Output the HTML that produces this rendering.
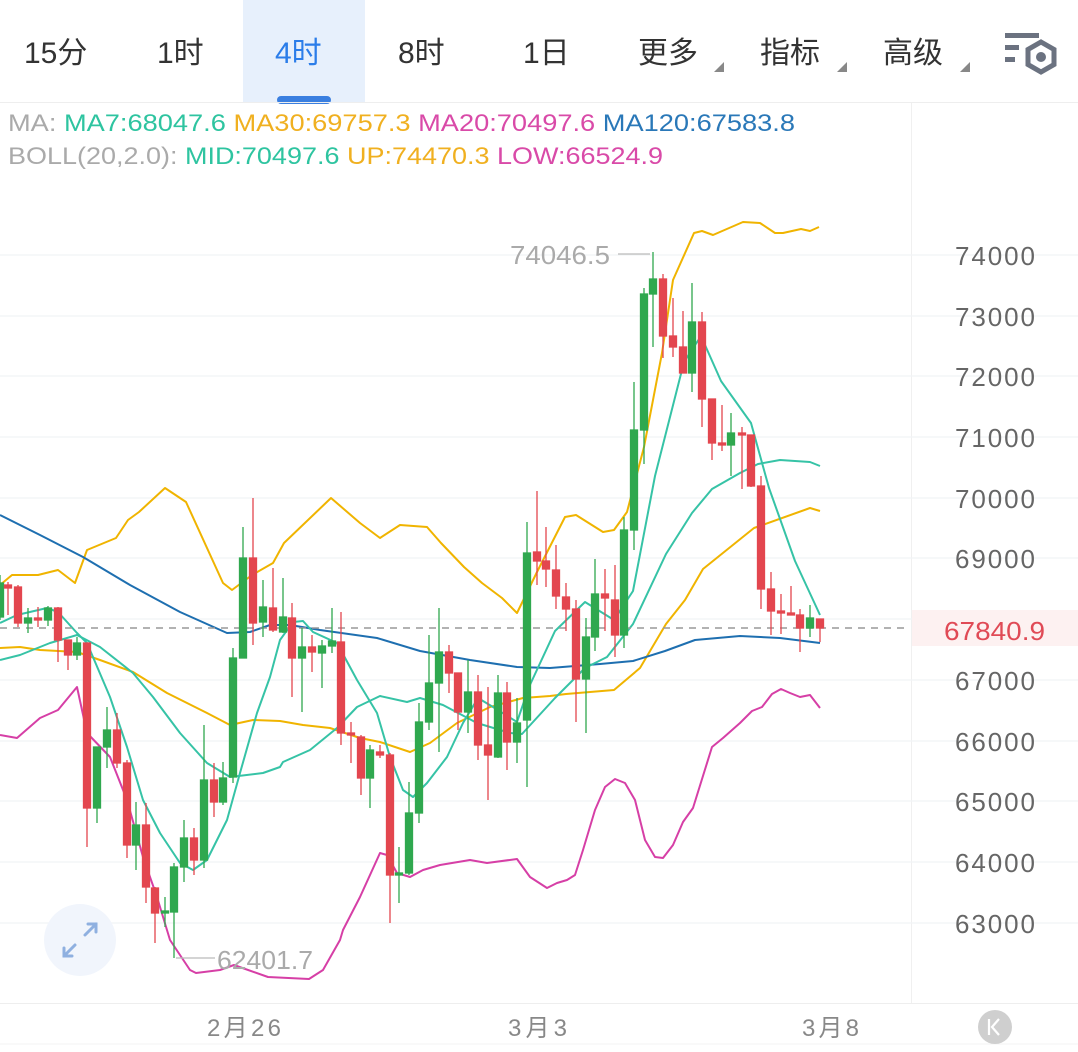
<!DOCTYPE html>
<html><head><meta charset="utf-8">
<style>
html,body{margin:0;padding:0;background:#fff;}
body{width:1078px;height:1052px;overflow:hidden;position:relative;font-family:"Liberation Sans","Noto Sans CJK SC",sans-serif;}
svg{position:absolute;left:0;top:0;}
</style></head><body>
<svg width="1078" height="1052" viewBox="0 0 1078 1052" xmlns="http://www.w3.org/2000/svg" font-family="Liberation Sans, Noto Sans CJK SC, sans-serif">
<rect x="243" y="0" width="122" height="102" fill="#e7f0fc"/>
<rect x="277" y="96" width="54" height="8" rx="4" fill="#3a7fe0"/>
<line x1="0" y1="102.5" x2="1078" y2="102.5" stroke="#eeeeee" stroke-width="1"/>
<g font-size="30" fill="#333">
<text x="24" y="63">15分</text>
<text x="157" y="63">1时</text>
<text x="275" y="63" fill="#2b7de9">4时</text>
<text x="398" y="63">8时</text>
<text x="523" y="63">1日</text>
<text x="638" y="63">更多</text>
<text x="760" y="63">指标</text>
<text x="883" y="63">高级</text>
</g>
<g fill="#888">
<polygon points="714,72 724,72 724,62"/>
<polygon points="837,72 847,72 847,62"/>
<polygon points="960,72 970,72 970,62"/>
</g>
<g fill="#6b7280">
<rect x="1005" y="33" width="34" height="5"/>
<rect x="1005" y="45" width="14" height="5"/>
<rect x="1005" y="57" width="10" height="5"/>
<polygon points="1041,42 1054,49.5 1054,64.5 1041,72 1028,64.5 1028,49.5" fill="none" stroke="#6b7280" stroke-width="5"/>
<circle cx="1041" cy="57" r="5"/>
</g>
<g font-size="24">
<text x="8" y="131" textLength="787" lengthAdjust="spacingAndGlyphs"><tspan fill="#aaa">MA: </tspan><tspan fill="#2ec4a0">MA7:68047.6 </tspan><tspan fill="#f0b020">MA30:69757.3 </tspan><tspan fill="#d94aa8">MA20:70497.6 </tspan><tspan fill="#2a78b8">MA120:67583.8</tspan></text>
<text x="8" y="164" textLength="655" lengthAdjust="spacingAndGlyphs"><tspan fill="#aaa">BOLL(20,2.0): </tspan><tspan fill="#2ec4a0">MID:70497.6 </tspan><tspan fill="#f0b020">UP:74470.3 </tspan><tspan fill="#d94aa8">LOW:66524.9</tspan></text>
</g>
<line x1="911.5" y1="103" x2="911.5" y2="1003" stroke="#f0f0f0"/>
<g stroke="#f1f3f5" stroke-width="1.2">
<line x1="0" y1="255" x2="1078" y2="255"/><line x1="0" y1="316" x2="1078" y2="316"/><line x1="0" y1="376" x2="1078" y2="376"/><line x1="0" y1="437" x2="1078" y2="437"/><line x1="0" y1="498" x2="1078" y2="498"/><line x1="0" y1="558" x2="1078" y2="558"/><line x1="0" y1="619" x2="1078" y2="619"/><line x1="0" y1="680" x2="1078" y2="680"/><line x1="0" y1="741" x2="1078" y2="741"/><line x1="0" y1="801" x2="1078" y2="801"/><line x1="0" y1="862" x2="1078" y2="862"/><line x1="0" y1="923" x2="1078" y2="923"/>
</g>
<g font-size="26" fill="#666" lengthAdjust="spacingAndGlyphs">
<text x="955" y="265" textLength="80">74000</text><text x="955" y="326" textLength="80">73000</text><text x="955" y="386" textLength="80">72000</text><text x="955" y="447" textLength="80">71000</text><text x="955" y="508" textLength="80">70000</text><text x="955" y="568" textLength="80">69000</text><text x="955" y="629" textLength="80">68000</text><text x="955" y="690" textLength="80">67000</text><text x="955" y="751" textLength="80">66000</text><text x="955" y="811" textLength="80">65000</text><text x="955" y="872" textLength="80">64000</text><text x="955" y="933" textLength="80">63000</text>
</g>
<rect x="912" y="610" width="166" height="36" fill="#fdf1f1"/>
<text x="944" y="640" font-size="26" fill="#e04a56" textLength="101" lengthAdjust="spacingAndGlyphs">67840.9</text>
<circle cx="80" cy="940" r="36" fill="#f1f5fc"/>
<g stroke="#8fb0e0" stroke-width="3" fill="none" stroke-linecap="round">
<path d="M85 935 L96 924 M88 924 L96 924 L96 932"/>
<path d="M75 945 L64 956 M64 948 L64 956 L72 956"/>
</g>
<g fill="none" stroke-width="2" stroke-linejoin="round">
<polyline stroke="#f0b400" points="0,585 12,575 38,575 58,570 75,583 87,550 116,538 128,520 139,512 165,488 186,502 223,583 232,590 252,575 273,563 284,543 331,498 360,523 380,538 400,525 427,527 441,543 464,567 482,583 502,598 517,613 537,572 565,517 576,515 603,532 614,530 627,512 644,447 662,353 673,280 694,233 702,231 713,235 743,222 760,223 775,233 783,233 801,229 810,231 819,227"/>
<polyline stroke="#f0b400" points="0,648 20,647 40,650 77,652 100,660 133,672 167,693 207,713 230,725 253,720 280,721 303,725 330,728 360,738 380,742 410,752 430,743 457,723 490,707 523,698 550,696 566,694 614,690 640,668 666,624 685,600 703,569 754,528 810,508 820,511"/>
<polyline stroke="#1e6fb0" points="0,515 40,535 83,557 130,585 180,612 227,633 250,632 270,625 290,625 320,630 377,638 420,651 470,660 517,667 550,668 600,664 633,661 665,651 695,640 740,636 780,638 820,643"/>
<polyline stroke="#d63fa6" points="0,735 17,738 40,718 58,710 77,687 87,733 110,757 127,800 143,857 157,897 170,940 190,970 196,973 220,970 234,965 268,977 309,979 323,970 340,940 343,930 360,897 380,853 387,855 397,873 410,877 423,870 440,865 470,860 487,863 517,859 530,877 547,888 557,883 567,880 575,875 583,850 595,810 605,787 615,779 625,783 635,800 645,840 655,857 663,858 673,845 683,822 693,808 712,747 723,738 740,723 752,711 762,707 772,694 781,689 790,693 800,697 810,695 820,708"/>
<polyline stroke="#36c3a6" points="0,660 20,655 50,643 77,635 100,647 133,673 153,697 180,733 207,763 230,777 263,773 280,767 283,762 310,750 337,728 357,707 380,696 407,702 420,698 443,705 477,723 510,733 522,734 555,698 585,668 607,657 633,624 666,554 692,513 712,489 740,473 758,464 780,460 810,462 820,466"/>
<polyline stroke="#36c3a6" points="0,623 17,615 47,608 58,612 77,633 87,643 110,697 127,747 143,800 160,833 180,863 193,870 207,860 227,820 240,773 257,713 270,677 280,640 293,622 303,621 313,632 337,643 357,680 377,713 390,757 403,790 413,797 427,783 447,757 463,723 478,698 493,707 517,722 529,687 555,631 585,602 614,620 633,591 655,476 684,362 701,336 721,381 751,423 769,488 795,561 820,615"/>
</g>
<line x1="0" y1="628" x2="910" y2="628" stroke="#999" stroke-width="1.5" stroke-dasharray="7,6"/>
<g stroke="#2fa84f" fill="#2fa84f" stroke-width="1.3">
<line x1="0" y1="575" x2="0" y2="620"/><rect x="-3.5" y="583" width="7" height="34"/>
<line x1="28" y1="608" x2="28" y2="633"/><rect x="24.5" y="618" width="7" height="5"/>
<line x1="48" y1="606" x2="48" y2="626"/><rect x="44.5" y="608" width="7" height="12"/>
<line x1="77" y1="637" x2="77" y2="660"/><rect x="73.5" y="643" width="7" height="12"/>
<line x1="97" y1="747" x2="97" y2="823"/><rect x="93.5" y="747" width="7" height="61"/>
<line x1="107" y1="707" x2="107" y2="768"/><rect x="103.5" y="730" width="7" height="17"/>
<line x1="136" y1="802" x2="136" y2="870"/><rect x="132.5" y="825" width="7" height="20"/>
<line x1="165" y1="897" x2="165" y2="927"/><rect x="161.5" y="911" width="7" height="2"/>
<line x1="174" y1="863" x2="174" y2="958"/><rect x="170.5" y="867" width="7" height="45"/>
<line x1="184" y1="820" x2="184" y2="882"/><rect x="180.5" y="838" width="7" height="29"/>
<line x1="204" y1="725" x2="204" y2="868"/><rect x="200.5" y="780" width="7" height="80"/>
<line x1="223" y1="762" x2="223" y2="805"/><rect x="219.5" y="778" width="7" height="24"/>
<line x1="233" y1="648" x2="233" y2="783"/><rect x="229.5" y="658" width="7" height="119"/>
<line x1="243" y1="527" x2="243" y2="658"/><rect x="239.5" y="558" width="7" height="100"/>
<line x1="263" y1="580" x2="263" y2="637"/><rect x="259.5" y="607" width="7" height="15"/>
<line x1="283" y1="578" x2="283" y2="633"/><rect x="279.5" y="617" width="7" height="15"/>
<line x1="302" y1="628" x2="302" y2="712"/><rect x="298.5" y="647" width="7" height="11"/>
<line x1="322" y1="640" x2="322" y2="688"/><rect x="318.5" y="646" width="7" height="7"/>
<line x1="332" y1="608" x2="332" y2="653"/><rect x="328.5" y="641" width="7" height="5"/>
<line x1="370" y1="745" x2="370" y2="808"/><rect x="366.5" y="750" width="7" height="28"/>
<line x1="399" y1="847" x2="399" y2="903"/><rect x="395.5" y="873" width="7" height="2"/>
<line x1="409" y1="782" x2="409" y2="875"/><rect x="405.5" y="813" width="7" height="60"/>
<line x1="419" y1="703" x2="419" y2="823"/><rect x="415.5" y="722" width="7" height="91"/>
<line x1="429" y1="635" x2="429" y2="730"/><rect x="425.5" y="683" width="7" height="39"/>
<line x1="439" y1="608" x2="439" y2="752"/><rect x="435.5" y="652" width="7" height="31"/>
<line x1="468" y1="660" x2="468" y2="733"/><rect x="464.5" y="692" width="7" height="20"/>
<line x1="498" y1="675" x2="498" y2="758"/><rect x="494.5" y="693" width="7" height="64"/>
<line x1="517" y1="698" x2="517" y2="763"/><rect x="513.5" y="723" width="7" height="19"/>
<line x1="527" y1="522" x2="527" y2="787"/><rect x="523.5" y="553" width="7" height="167"/>
<line x1="586" y1="618" x2="586" y2="733"/><rect x="582.5" y="637" width="7" height="42"/>
<line x1="595" y1="559" x2="595" y2="651"/><rect x="591.5" y="594" width="7" height="43"/>
<line x1="624" y1="517" x2="624" y2="648"/><rect x="620.5" y="530" width="7" height="105"/>
<line x1="634" y1="382" x2="634" y2="550"/><rect x="630.5" y="430" width="7" height="100"/>
<line x1="644" y1="288" x2="644" y2="464"/><rect x="640.5" y="294" width="7" height="136"/>
<line x1="653" y1="252" x2="653" y2="347"/><rect x="649.5" y="279" width="7" height="15"/>
<line x1="692" y1="283" x2="692" y2="392"/><rect x="688.5" y="322" width="7" height="51"/>
<line x1="731" y1="413" x2="731" y2="476"/><rect x="727.5" y="433" width="7" height="12"/>
<line x1="810" y1="605" x2="810" y2="637"/><rect x="806.5" y="618" width="7" height="10"/>
</g>
<g stroke="#e3464f" fill="#e3464f" stroke-width="1.3">
<line x1="8" y1="582" x2="8" y2="615"/><rect x="4.5" y="585" width="7" height="3"/>
<line x1="18" y1="585" x2="18" y2="627"/><rect x="14.5" y="587" width="7" height="36"/>
<line x1="38" y1="607" x2="38" y2="627"/><rect x="34.5" y="618" width="7" height="2"/>
<line x1="58" y1="607" x2="58" y2="662"/><rect x="54.5" y="608" width="7" height="32"/>
<line x1="68" y1="640" x2="68" y2="670"/><rect x="64.5" y="640" width="7" height="15"/>
<line x1="87" y1="643" x2="87" y2="847"/><rect x="83.5" y="643" width="7" height="165"/>
<line x1="117" y1="713" x2="117" y2="768"/><rect x="113.5" y="730" width="7" height="33"/>
<line x1="127" y1="760" x2="127" y2="858"/><rect x="123.5" y="763" width="7" height="82"/>
<line x1="146" y1="803" x2="146" y2="903"/><rect x="142.5" y="825" width="7" height="62"/>
<line x1="155" y1="887" x2="155" y2="943"/><rect x="151.5" y="888" width="7" height="25"/>
<line x1="194" y1="828" x2="194" y2="875"/><rect x="190.5" y="838" width="7" height="22"/>
<line x1="214" y1="763" x2="214" y2="817"/><rect x="210.5" y="780" width="7" height="22"/>
<line x1="253" y1="498" x2="253" y2="645"/><rect x="249.5" y="558" width="7" height="65"/>
<line x1="273" y1="568" x2="273" y2="632"/><rect x="269.5" y="608" width="7" height="22"/>
<line x1="292" y1="603" x2="292" y2="697"/><rect x="288.5" y="618" width="7" height="40"/>
<line x1="312" y1="635" x2="312" y2="672"/><rect x="308.5" y="647" width="7" height="5"/>
<line x1="341" y1="612" x2="341" y2="745"/><rect x="337.5" y="642" width="7" height="91"/>
<line x1="351" y1="722" x2="351" y2="763"/><rect x="347.5" y="733" width="7" height="2"/>
<line x1="361" y1="735" x2="361" y2="795"/><rect x="357.5" y="737" width="7" height="41"/>
<line x1="380" y1="745" x2="380" y2="758"/><rect x="376.5" y="752" width="7" height="3"/>
<line x1="390" y1="753" x2="390" y2="923"/><rect x="386.5" y="755" width="7" height="120"/>
<line x1="449" y1="645" x2="449" y2="693"/><rect x="445.5" y="652" width="7" height="21"/>
<line x1="458" y1="673" x2="458" y2="730"/><rect x="454.5" y="673" width="7" height="39"/>
<line x1="478" y1="675" x2="478" y2="760"/><rect x="474.5" y="692" width="7" height="53"/>
<line x1="488" y1="687" x2="488" y2="800"/><rect x="484.5" y="745" width="7" height="10"/>
<line x1="507" y1="682" x2="507" y2="770"/><rect x="503.5" y="693" width="7" height="49"/>
<line x1="537" y1="491" x2="537" y2="585"/><rect x="533.5" y="552" width="7" height="9"/>
<line x1="546" y1="527" x2="546" y2="587"/><rect x="542.5" y="561" width="7" height="8"/>
<line x1="556" y1="545" x2="556" y2="609"/><rect x="552.5" y="570" width="7" height="26"/>
<line x1="566" y1="583" x2="566" y2="631"/><rect x="562.5" y="597" width="7" height="12"/>
<line x1="576" y1="600" x2="576" y2="722"/><rect x="572.5" y="609" width="7" height="70"/>
<line x1="605" y1="569" x2="605" y2="631"/><rect x="601.5" y="594" width="7" height="4"/>
<line x1="615" y1="565" x2="615" y2="657"/><rect x="611.5" y="600" width="7" height="35"/>
<line x1="663" y1="274" x2="663" y2="358"/><rect x="659.5" y="279" width="7" height="57"/>
<line x1="673" y1="298" x2="673" y2="357"/><rect x="669.5" y="336" width="7" height="11"/>
<line x1="683" y1="311" x2="683" y2="373"/><rect x="679.5" y="347" width="7" height="26"/>
<line x1="702" y1="312" x2="702" y2="427"/><rect x="698.5" y="322" width="7" height="77"/>
<line x1="712" y1="399" x2="712" y2="460"/><rect x="708.5" y="399" width="7" height="44"/>
<line x1="722" y1="405" x2="722" y2="451"/><rect x="718.5" y="443" width="7" height="2"/>
<line x1="742" y1="427" x2="742" y2="489"/><rect x="738.5" y="433" width="7" height="2"/>
<line x1="751" y1="435" x2="751" y2="487"/><rect x="747.5" y="435" width="7" height="51"/>
<line x1="761" y1="476" x2="761" y2="609"/><rect x="757.5" y="486" width="7" height="103"/>
<line x1="771" y1="572" x2="771" y2="635"/><rect x="767.5" y="589" width="7" height="22"/>
<line x1="781" y1="594" x2="781" y2="634"/><rect x="777.5" y="611" width="7" height="2"/>
<line x1="791" y1="586" x2="791" y2="615"/><rect x="787.5" y="613" width="7" height="2"/>
<line x1="800" y1="609" x2="800" y2="652"/><rect x="796.5" y="615" width="7" height="13"/>
<line x1="820" y1="619" x2="820" y2="642"/><rect x="816.5" y="619" width="7" height="9"/>
</g>
<line x1="618" y1="254" x2="650" y2="254" stroke="#bbb" stroke-width="1.2"/>
<text x="510" y="264" font-size="26" fill="#aaa" textLength="100" lengthAdjust="spacingAndGlyphs">74046.5</text>
<line x1="176" y1="958" x2="215" y2="958" stroke="#bbb" stroke-width="1.2"/>
<text x="217" y="969" font-size="26" fill="#aaa" textLength="96" lengthAdjust="spacingAndGlyphs">62401.7</text>
<line x1="0" y1="1003.5" x2="1078" y2="1003.5" stroke="#eeeeee"/>
<line x1="0" y1="1044" x2="1078" y2="1044" stroke="#f3f3f3"/>
<g font-size="24" fill="#888" lengthAdjust="spacingAndGlyphs">
<text x="207" y="1036" textLength="74">2月26</text>
<text x="508" y="1036" textLength="59">3月3</text>
<text x="802" y="1036" textLength="57">3月8</text>
</g>
<circle cx="995" cy="1027" r="17" fill="#cfcfcf"/>
<path d="M989 1019 V1035 M999 1019 L992 1027 L999 1035" stroke="#fff" stroke-width="2.2" fill="none"/>
</svg>
</body></html>
